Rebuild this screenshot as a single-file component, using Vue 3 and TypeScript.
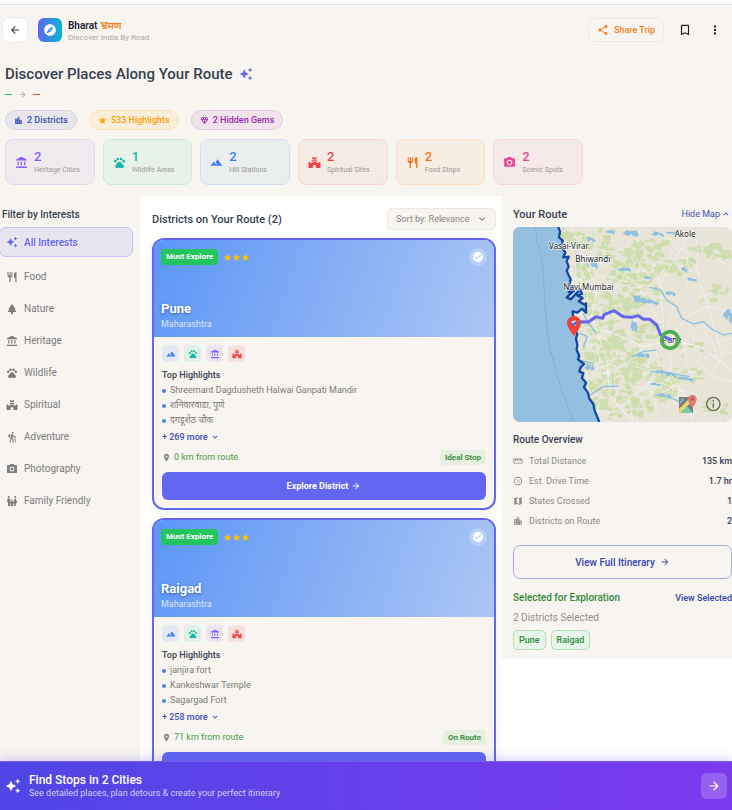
<script setup lang="ts">
import { ref, h, type FunctionalComponent } from 'vue'

const paths: Record<string, string> = {
  back: 'M20 11H7.8l5.6-5.6L12 4l-8 8 8 8 1.4-1.4L7.8 13H20z',
  forward: 'M12 4l-1.4 1.4 5.6 5.6H4v2h12.2l-5.6 5.6L12 20l8-8z',
  compass: 'M12 10.9c-.61 0-1.1.49-1.1 1.1s.49 1.1 1.1 1.1 1.1-.49 1.1-1.1-.49-1.1-1.1-1.1zM12 2C6.48 2 2 6.48 2 12s4.48 10 10 10 10-4.48 10-10S17.52 2 12 2zm2.19 12.19L6 18l3.81-8.19L18 6l-3.81 8.19z',
  share: 'M18 16.08c-.76 0-1.44.3-1.96.77L8.91 12.7c.05-.23.09-.46.09-.7s-.04-.47-.09-.7l7.05-4.11c.54.5 1.25.81 2.04.81 1.66 0 3-1.34 3-3s-1.34-3-3-3-3 1.34-3 3c0 .24.04.47.09.7L8.04 9.81C7.5 9.31 6.79 9 6 9c-1.66 0-3 1.34-3 3s1.34 3 3 3c.79 0 1.5-.31 2.04-.81l7.12 4.16c-.05.21-.08.43-.08.65 0 1.61 1.31 2.92 2.92 2.92s2.92-1.31 2.92-2.92-1.31-2.92-2.92-2.92z',
  bookmark: 'M17 3H7c-1.1 0-2 .9-2 2v16l7-3 7 3V5c0-1.1-.9-2-2-2zm0 15l-5-2.18L7 18V5h10z',
  more: 'M12 8a2 2 0 1 0 0-4 2 2 0 0 0 0 4zm0 2a2 2 0 1 0 0 4 2 2 0 0 0 0-4zm0 6a2 2 0 1 0 0 4 2 2 0 0 0 0-4z',
  sparkle: 'M19 9l1.25-2.75L23 5l-2.75-1.25L19 1l-1.25 2.75L15 5l2.75 1.25zM11.5 9.5L9 4 6.5 9.5 1 12l5.5 2.5L9 20l2.5-5.5L17 12zM19 15l-1.25 2.75L15 19l2.75 1.25L19 23l1.25-2.75L23 19l-2.75-1.25z',
  heritage: 'M4.5 10v7h2.3v-7zm6 0v7h2.3v-7zM2 22h20v-2.6H2zm14.8-12v7h2.3v-7zM12 1.5L2 6.3V8.5h20V6.3z',
  wildlife: 'M2 9.5a2.5 2.5 0 1 0 5 0 2.5 2.5 0 0 0-5 0zM6.5 5.5a2.5 2.5 0 1 0 5 0 2.5 2.5 0 0 0-5 0zM12.5 5.5a2.5 2.5 0 1 0 5 0 2.5 2.5 0 0 0-5 0zM17 9.5a2.5 2.5 0 1 0 5 0 2.5 2.5 0 0 0-5 0zM17.34 14.86c-.87-1.02-1.6-1.89-2.48-2.91-.46-.54-1.05-1.08-1.75-1.32-.35-.11-.75-.13-1.11-.13s-.77.02-1.12.14c-.7.24-1.28.78-1.75 1.32-.87 1.02-1.6 1.89-2.48 2.91-1.31 1.31-2.92 2.76-2.62 4.79.29 1.02 1.02 2.03 2.33 2.32.73.15 3.06-.44 5.54-.44h.18c2.48 0 4.81.58 5.54.44 1.31-.29 2.04-1.31 2.33-2.32.31-2.04-1.3-3.49-2.61-4.8z',
  hill: 'M14 6l-3.75 5 2.85 3.8-1.6 1.2C9.81 13.75 7 10 7 10l-6 8h22z',
  spiritual: 'M8 2h1.8v2h1.3V2h1.8v2h1.3V2H16v4.5H8zM7 8h10v2H7zM8.5 11.2h7V13H20v-2h3v11h-8v-3a3 3 0 0 0-6 0v3H1V11h3v2h4.5z',
  food: 'M11 9H9V2H7v7H5V2H3v7c0 2.12 1.66 3.84 3.75 3.97V22h2.5v-9.03C11.34 12.84 13 11.12 13 9V2h-2zm5-3v8h2.5v8H21V2c-2.76 0-5 2.24-5 4z',
  camera: 'M9 2L7.17 4H4c-1.1 0-2 .9-2 2v12c0 1.1.9 2 2 2h16c1.1 0 2-.9 2-2V6c0-1.1-.9-2-2-2h-3.17L15 2zm3 15a5 5 0 1 1 0-10 5 5 0 0 1 0 10zm0-1.8a3.2 3.2 0 1 0 0-6.4 3.2 3.2 0 0 0 0 6.4z',
  nature: 'M17 12h2L12 2 5.05 12H7l-3.9 6h6.92v4h3.96v-4H21z',
  hiking: 'M13.5 5.5a2 2 0 1 0 0-4 2 2 0 0 0 0 4zM17.5 10.78c-1.23-.37-2.22-1.17-2.8-2.18l-1-1.6c-.41-.65-1.11-1-1.84-1-.78 0-1.59.5-1.78 1.44S7 23 7 23h2.1l1.8-8 2.1 2v6h2v-7.5l-2.1-2 .6-3c1 1.15 2.41 2.01 4 2.34V23H19V9h-1.5zM7.43 13.13l-2.12-.41c-.54-.11-.9-.63-.79-1.17l.76-3.93c.21-1.08 1.26-1.79 2.34-1.58l1.16.23z',
  family: 'M5.5 6a2 2 0 1 0 0-4 2 2 0 0 0 0 4zm13 0a2 2 0 1 0 0-4 2 2 0 0 0 0 4zM12 12a1.5 1.5 0 1 0 0-3 1.5 1.5 0 0 0 0 3zM4 22v-7.5H2.5V9c0-1.1.9-2 2-2h2.2c1.1 0 2 .9 2 2v4.5h1.6c.4-.6 1-.8 1.7-.8s1.3.2 1.7.8h1.8L17 8.3c.3-.8.8-1.3 1.5-1.3s1.3.5 1.6 1.3L22.5 16H20v6h-3v-5h-2.5v5h-5v-6H8v6z',
  city: 'M15 11V5l-3-3-3 3v2H3v14h18V11zM7 19H5v-2h2zm0-4H5v-2h2zm0-4H5V9h2zm6 8h-2v-2h2zm0-4h-2v-2h2zm0-4h-2V9h2zm0-4h-2V5h2zm6 12h-2v-2h2zm0-4h-2v-2h2z',
  star: 'M12 17.27L18.18 21l-1.64-7.03L22 9.24l-7.19-.61L12 2 9.19 8.63 2 9.24l5.46 4.73L5.82 21z',
  gem: 'M19 3H5L2 9l10 12L22 9zM9.62 8l1.5-3h1.76l1.5 3zM11 10v6.68L5.44 10zm2 0h5.56L13 16.68zm6.26-2h-2.65l-1.5-3h2.65zM6.24 5h2.65l-1.5 3H4.74z',
  down: 'M7.4 8.6L12 13.2l4.6-4.6L18 10l-6 6-6-6z',
  up: 'M12 8l-6 6 1.4 1.4 4.6-4.6 4.6 4.6L18 14z',
  pin: 'M12 2a7 7 0 0 0-7 7c0 5.25 7 13 7 13s7-7.75 7-13a7 7 0 0 0-7-7zm0 9.5a2.5 2.5 0 1 1 0-5 2.5 2.5 0 0 1 0 5z',
  ruler: 'M21 6H3c-1.1 0-2 .9-2 2v8c0 1.1.9 2 2 2h18c1.1 0 2-.9 2-2V8c0-1.1-.9-2-2-2zm0 10H3V8h2v4h2V8h2v4h2V8h2v4h2V8h2v4h2V8h2z',
  clock: 'M12 2a10 10 0 1 0 0 20 10 10 0 0 0 0-20zm0 18a8 8 0 1 1 0-16 8 8 0 0 1 0 16zm.5-13H11v6l5.2 3.2.8-1.3-4.5-2.7z',
  map: 'M20.5 3l-.16.03L15 5.1 9 3 3.36 4.9c-.21.07-.36.25-.36.48V20.5c0 .28.22.5.5.5l.16-.03L9 18.9l6 2.1 5.64-1.9c.21-.07.36-.25.36-.48V3.5c0-.28-.22-.5-.5-.5zM15 19l-6-2.11V5l6 2.11z',
  check: 'M12 2a10 10 0 1 0 0 20 10 10 0 0 0 0-20zm-2 15l-5-5 1.41-1.41L10 14.17l7.59-7.59L19 8z',
}

const Icon: FunctionalComponent<{ name: string }> = (props) =>
  h('svg', { viewBox: '0 0 24 24', 'aria-hidden': 'true' }, [h('path', { d: paths[props.name], fill: 'currentColor', 'fill-rule': 'evenodd' })])
Icon.props = ['name']

const chips = [
  { icon: 'city', text: '2 Districts', tone: 'indigo' },
  { icon: 'star', text: '533 Highlights', tone: 'amber' },
  { icon: 'gem', text: '2 Hidden Gems', tone: 'purple' },
]

const stats = [
  { icon: 'heritage', count: 2, label: 'Heritage Cities', tone: 'violet' },
  { icon: 'wildlife', count: 1, label: 'Wildlife Areas', tone: 'teal' },
  { icon: 'hill', count: 2, label: 'Hill Stations', tone: 'blue' },
  { icon: 'spiritual', count: 2, label: 'Spiritual Sites', tone: 'red' },
  { icon: 'food', count: 2, label: 'Food Stops', tone: 'orange' },
  { icon: 'camera', count: 2, label: 'Scenic Spots', tone: 'pink' },
]

const filters = [
  { icon: 'sparkle', label: 'All Interests' },
  { icon: 'food', label: 'Food' },
  { icon: 'nature', label: 'Nature' },
  { icon: 'heritage', label: 'Heritage' },
  { icon: 'wildlife', label: 'Wildlife' },
  { icon: 'spiritual', label: 'Spiritual' },
  { icon: 'hiking', label: 'Adventure' },
  { icon: 'camera', label: 'Photography' },
  { icon: 'family', label: 'Family Friendly' },
]
const activeFilter = ref('All Interests')

interface District {
  name: string
  state: string
  highlights: string[]
  more: number
  distance: string
  badge: string
  selected: boolean
}
const districts = ref<District[]>([
  { name: 'Pune', state: 'Maharashtra', highlights: ['Shreemant Dagdusheth Halwai Ganpati Mandir', 'शनिवारवाडा, पुणे', 'दगडूशेठ चौक'], more: 269, distance: '0 km from route', badge: 'Ideal Stop', selected: true },
  { name: 'Raigad', state: 'Maharashtra', highlights: ['janjira fort', 'Kankeshwar Temple', 'Sagargad Fort'], more: 258, distance: '71 km from route', badge: 'On Route', selected: true },
])
const tags = [
  { icon: 'hill', tone: 'blue' },
  { icon: 'wildlife', tone: 'teal' },
  { icon: 'heritage', tone: 'violet' },
  { icon: 'spiritual', tone: 'red' },
]

const overview = [
  { icon: 'ruler', label: 'Total Distance', value: '135 km' },
  { icon: 'clock', label: 'Est. Drive Time', value: '1.7 hr' },
  { icon: 'map', label: 'States Crossed', value: '1' },
  { icon: 'city', label: 'Districts on Route', value: '2' },
]

const showMap = ref(true)

// Seeded generator so the terrain is the same on every load
let seed = 11
const rnd = () => {
  seed = (seed * 16807) % 2147483647
  return seed / 2147483647
}
const blob = (cx: number, cy: number, rx: number, ry: number) => {
  const n = 11
  const pts: string[] = []
  for (let i = 0; i < n; i++) {
    const a = (i / n) * Math.PI * 2
    const k = 0.4 + rnd() * 0.8
    pts.push(`${Math.round(cx + Math.cos(a) * rx * k)} ${Math.round(cy + Math.sin(a) * ry * k)}`)
  }
  return `M${pts.join('L')}Z`
}
// Forest clusters: centre x, centre y, spread x, spread y, number of patches
const clusters = [
  [225, 110, 35, 28, 16], [310, 140, 40, 55, 18], [370, 200, 70, 60, 34], [440, 150, 70, 30, 26],
  [500, 200, 70, 30, 26], [630, 160, 60, 25, 24], [250, 220, 25, 30, 10], [420, 270, 60, 50, 32],
  [300, 310, 40, 30, 18], [380, 320, 60, 30, 22], [640, 280, 45, 25, 8], [310, 400, 50, 50, 32],
  [380, 440, 50, 50, 32], [290, 480, 40, 40, 26], [350, 530, 60, 50, 36], [430, 500, 60, 40, 24],
  [300, 580, 40, 50, 28], [390, 610, 60, 40, 32], [480, 570, 50, 40, 20], [560, 530, 60, 25, 14],
  [570, 450, 40, 20, 6], [640, 620, 40, 20, 8], [450, 390, 40, 25, 12],
]
const forest = clusters.map(([x, y, w, t, n]) =>
  Array.from({ length: n }, () => blob(x + (rnd() * 2 - 1) * w, y + (rnd() * 2 - 1) * t, 6 + rnd() * 14, 4 + rnd() * 9)).join(''),
)
// Minor roads wander away from each start point
const roads = Array.from({ length: 62 }, () => {
  let x = 220 + rnd() * 470
  let y = 90 + rnd() * 570
  let d = `M${Math.round(x)} ${Math.round(y)}`
  const a = rnd() * Math.PI * 2
  for (let i = 0; i < 7; i++) {
    x += Math.cos(a) * 16 + (rnd() - 0.5) * 16
    y += Math.sin(a) * 16 + (rnd() - 0.5) * 16
    d += `L${Math.round(Math.max(215 + (y > 450 ? (y - 450) / 3 : 0), x))} ${Math.round(y)}`
  }
  return d
}).join('')
const lakes = [
  [385, 98, 20, 10], [470, 100, 16, 8], [270, 118, 12, 6], [508, 98, 16, 4], [370, 208, 18, 5], [550, 208, 9, 9],
  [412, 296, 20, 12], [450, 305, 16, 8], [398, 375, 9, 16], [508, 280, 14, 6], [426, 465, 18, 8], [480, 516, 24, 6],
  [505, 522, 18, 7], [550, 535, 22, 5], [462, 552, 14, 4], [680, 345, 12, 18], [485, 585, 20, 5], [265, 500, 12, 10],
  [280, 195, 10, 9], [330, 95, 12, 5], [572, 238, 14, 5], [440, 232, 10, 5],
]
  .map(([x, y, w, t]) => blob(x, y, w, t) + blob(x + w, y + t / 2, w / 2, t))
  .join('')
const coast = 'M174 78L180 95 177 112 188 122 184 140 196 158 190 172 206 170 200 184 206 200 200 212 205 224 212 238 207 258 220 262 206 276 222 272 200 292 212 298 240 268 246 282 232 286 248 294 236 304 254 314 258 310 258 338 246 326 232 338 218 334 220 358 206 362 226 390 232 402 228 416 232 434 230 450 238 468 234 478 252 492 242 502 238 514 250 520 246 534 258 548 252 562 264 578 268 596 280 612 284 632 298 666'
</script>

<template>
  <div class="shell">
    <div class="topline"></div>
    <div class="content">
      <header class="head">
        <div class="bar">
          <button class="back" type="button" aria-label="Back"><Icon name="back" /></button>
          <span class="logo"><Icon name="compass" /></span>
          <div class="brand">
            <strong>Bharat <em>भ्रमण</em></strong>
            <small>Discover India By Road</small>
          </div>
          <button class="share" type="button"><Icon name="share" />Share Trip</button>
          <button class="ghost" type="button" aria-label="Bookmark"><Icon name="bookmark" /></button>
          <button class="ghost" type="button" aria-label="More"><Icon name="more" /></button>
        </div>
        <h1>Discover Places Along Your Route <Icon name="sparkle" /></h1>
        <div class="ends"><i class="from"></i><Icon name="forward" /><i class="to"></i></div>
        <div class="chips">
          <span v-for="c in chips" :key="c.text" class="chip" :class="c.tone"><Icon :name="c.icon" />{{ c.text }}</span>
        </div>
        <div class="stats">
          <div v-for="s in stats" :key="s.label" class="stat" :class="s.tone">
            <Icon :name="s.icon" />
            <div><b>{{ s.count }}</b><span>{{ s.label }}</span></div>
          </div>
        </div>
      </header>

      <div class="columns">
        <nav class="filters">
          <h2>Filter by Interests</h2>
          <button v-for="f in filters" :key="f.label" type="button" :class="{ active: activeFilter === f.label }" @click="activeFilter = f.label">
            <Icon :name="f.icon" />{{ f.label }}
          </button>
        </nav>

        <main class="list">
          <div class="listhead">
            <h2>Districts on Your Route ({{ districts.length }})</h2>
            <div class="sort">
              <select aria-label="Sort by"><option>Sort by: Relevance</option></select>
              <Icon name="down" />
            </div>
          </div>
          <article v-for="d in districts" :key="d.name" class="card">
            <div class="hero">
              <div class="herotop">
                <span class="must">Must Explore</span>
                <span class="stars"><Icon v-for="n in 3" :key="n" name="star" /></span>
                <label class="pick"><input v-model="d.selected" type="checkbox" :aria-label="d.name" /><Icon name="check" /></label>
              </div>
              <h3>{{ d.name }}</h3>
              <p>{{ d.state }}</p>
            </div>
            <div class="body">
              <div class="tags"><span v-for="t in tags" :key="t.icon" :class="t.tone"><Icon :name="t.icon" /></span></div>
              <h4>Top Highlights</h4>
              <ul><li v-for="x in d.highlights" :key="x">{{ x }}</li></ul>
              <button class="expand" type="button">+ {{ d.more }} more <Icon name="down" /></button>
              <div class="meta"><Icon name="pin" /><span>{{ d.distance }}</span><em>{{ d.badge }}</em></div>
              <button class="explore" type="button">Explore District <Icon name="forward" /></button>
            </div>
          </article>
        </main>

        <aside class="route">
          <div class="row">
            <h2>Your Route</h2>
            <button class="toggle" type="button" @click="showMap = !showMap">Hide Map <Icon name="up" /></button>
          </div>
          <svg v-if="showMap" class="mapview" viewBox="39 81 657 585" preserveAspectRatio="xMidYMid slice">
            <rect x="39" y="81" width="657" height="585" fill="#e8e5d8" />
            <path v-for="(f, i) in forest" :key="i" :d="f" fill="#cfdeae" />
            <path :d="roads" fill="none" stroke="#f5f3ec" stroke-width="2" />
            <path d="M510 420L560 350 620 320 696 335M510 420L600 440 696 510M510 420L512 520 560 600 580 666M510 420L430 440 340 400 262 380M490 380L480 250 560 120 580 81M215 81L250 170 330 200 410 250 490 380M250 170L290 270 275 350 320 480 330 590 400 666M600 250L625 320 660 440M580 470L640 530 696 545" fill="none" stroke="#fbfaf6" stroke-width="2" />
            <path :d="lakes" fill="#8fbfe3" />
            <path d="M448 262L480 268 500 300 530 320 545 355 580 372 610 365 640 390 670 405 696 400M225 160L255 180 265 200M250 340L265 370 290 400M240 400L262 410 250 440M235 480L280 490M270 585L310 560 355 558M470 585L500 590 540 605M395 470L430 455 470 450M450 515L500 518 570 530" fill="none" stroke="#8fbfe3" stroke-width="4" stroke-linejoin="round" />
            <path :d="coast + 'L39 666V78Z'" fill="#94bfe1" />
            <path d="M107 81L112 130 126 180 132 260 138 360 148 440 176 540 200 610 222 666" fill="none" stroke="#8a9bab" stroke-width="2" stroke-dasharray="14 4" />
            <path :d="coast" fill="none" stroke="#1148a3" stroke-width="7" stroke-linejoin="round" />
            <g class="places">
              <text x="147" y="148">Vasai-Virar</text>
              <text x="226" y="185">Bhiwandi</text>
              <text x="190" y="269">Navi Mumbai</text>
              <text x="524" y="110">Akole</text>
              <text x="487" y="428">Pune</text>
            </g>
            <path d="M222 372L235 365 265 366 288 350 308 355 312 344 342 332 370 350 395 352 415 347 430 358 450 358 470 375 482 405 510 418" fill="none" stroke="#6366f1" stroke-width="9" stroke-linejoin="round" stroke-linecap="round" />
            <circle cx="510" cy="420" r="25" fill="none" stroke="#4caf50" stroke-width="11" />
            <path fill="#f44336" fill-rule="evenodd" d="M222 348a21 21 0 0 0-21 21c0 14 21 39 21 39s21-25 21-39a21 21 0 0 0-21-21zm0 29a8 8 0 1 1 0-16 8 8 0 0 1 0 16z" />
            <g opacity=".85">
              <path d="M537 591h42v48h-42z" fill="#626c72" />
              <path d="M537 639v-12l36-36h6v10l-37 38z" fill="#f2d558" />
              <path d="M541 639l20-20 19 20z" fill="#5fc8a0" />
              <path d="M540 603h5v-7h5v7h-5v5h-5z" fill="#7cc5e8" />
              <path fill="#e0685f" d="M577 585a13 13 0 0 0-13 13c0 10 13 25 13 25s13-15 13-25a13 13 0 0 0-13-13z" />
              <circle cx="577" cy="597" r="5" fill="#a54540" />
            </g>
            <circle cx="640" cy="612" r="20" fill="none" stroke="#69695f" stroke-width="4" />
            <path d="M638 601h4v4h-4zM638 610h4v13h-4z" fill="#69695f" />
          </svg>
          <h3>Route Overview</h3>
          <dl>
            <div v-for="o in overview" :key="o.label"><Icon :name="o.icon" /><dt>{{ o.label }}</dt><dd>{{ o.value }}</dd></div>
          </dl>
          <button class="full" type="button">View Full Itinerary <Icon name="forward" /></button>
          <div class="row">
            <h3 class="green">Selected for Exploration</h3>
            <a href="#selected">View Selected</a>
          </div>
          <p>2 Districts Selected</p>
          <div class="picked"><span v-for="d in districts" :key="d.name">{{ d.name }}</span></div>
        </aside>
      </div>
    </div>

    <footer class="cta">
      <Icon name="sparkle" />
      <div><strong>Find Stops in 2 Cities</strong><span>See detailed places, plan detours &amp; create your perfect itinerary</span></div>
      <button type="button" aria-label="Find stops"><Icon name="forward" /></button>
    </footer>
  </div>
</template>

<style>
body {
  margin: 0;
  background: #fff;
}
</style>

<style scoped>
* {
  box-sizing: border-box;
  margin: 0;
  padding: 0;
}
.shell {
  display: flex;
  flex-direction: column;
  height: 100vh;
  font-family: Roboto, "Noto Sans", sans-serif;
  font-size: 9px;
  color: #374151;
}
button, select {
  font: inherit;
  color: inherit;
  background: none;
  border: 0;
  cursor: pointer;
}
svg {
  display: block;
  flex: none;
  width: 12px;
  height: 12px;
}
h1, h2, h3, h4 {
  font-weight: 500;
}
.topline {
  flex: none;
  height: 6px;
  background: linear-gradient(#fff 4px, #dedede 4px, #dedede 5px, #fff 5px);
}
.content {
  flex: 1;
  min-height: 0;
  overflow-y: auto;
  scrollbar-width: none;
}
.head {
  background: #f8f4ef;
  padding: 11px 5px;
}
.bar {
  display: flex;
  align-items: center;
  height: 26px;
}
.back {
  display: grid;
  place-items: center;
  width: 26px;
  height: 26px;
  margin-left: -3px;
  background: #fff;
  border: 1px solid #e9eaee;
  border-radius: 7px;
  color: #333;
}
.logo {
  display: grid;
  place-items: center;
  width: 24px;
  height: 24px;
  margin: 0 6px 0 10px;
  border-radius: 6px;
  background: linear-gradient(90deg, #6366f1, #06b6d4);
  color: #fff;
}
.logo svg {
  width: 14px;
  height: 14px;
}
.brand {
  flex: 1;
  display: grid;
}
.brand strong {
  font-size: 10px;
  line-height: 15px;
  font-weight: 600;
  color: #1f2333;
}
.brand em {
  font-style: normal;
  color: #f97b22;
}
.brand small {
  font-size: 8px;
  line-height: 9px;
  color: #a9a7a5;
}
.share {
  display: flex;
  align-items: center;
  gap: 5px;
  height: 24px;
  padding: 0 8px;
  border: 1px solid #e9e9ea;
  border-radius: 6px;
  color: #f97b22;
  font-size: 9px;
  font-weight: 500;
}
.ghost {
  display: grid;
  place-items: center;
  width: 30px;
  height: 24px;
  color: #222;
}
.share + .ghost {
  margin-left: 6px;
}
.ghost:last-child {
  margin-right: -3px;
}
.ghost svg {
  width: 14px;
  height: 14px;
}
h1 {
  display: flex;
  align-items: center;
  gap: 6px;
  margin-top: 21px;
  font-size: 15px;
  line-height: 20px;
}
h1 svg {
  width: 14px;
  height: 14px;
  color: #6366f1;
}
.ends {
  display: flex;
  align-items: center;
  gap: 6px;
  height: 13px;
  margin-top: 4px;
  color: #a3a3a3;
}
.ends svg {
  width: 9px;
  height: 9px;
}
.ends i {
  width: 7px;
  height: 1px;
  background: #22c55e;
}
.ends .to {
  background: #ef4444;
}
.chips {
  display: flex;
  gap: 12px;
  margin-top: 9px;
}
.chip {
  display: flex;
  align-items: center;
  gap: 4px;
  height: 20px;
  padding: 0 8px;
  border: 1px solid;
  border-radius: 10px;
  font-size: 9px;
  font-weight: 500;
}
.chip svg {
  width: 9px;
  height: 9px;
}
.stats {
  display: grid;
  grid-template-columns: repeat(6, 1fr);
  gap: 8px;
  max-width: 578px;
  margin-top: 9px;
}
.stat {
  display: flex;
  align-items: center;
  gap: 6px;
  height: 46px;
  padding: 0 9px;
  border: 1px solid;
  border-radius: 8px;
}
.indigo { color: #3f51b5; background: #e8e6eb; border-color: #d5d5e5; }
.amber { color: #ffa000; background: #f9eedb; border-color: #fae2b8; }
.purple { color: #9c27b0; background: #f1e3ea; border-color: #e5cbe2; }
.violet { color: #8b5cf6; background: #f0ebef; border-color: #e2d9f0; }
.teal { color: #14b8a6; background: #e8f1ea; border-color: #d0e9e0; }
.blue { color: #3b82f6; background: #eaeeef; border-color: #d3e0f1; }
.red { color: #ef4444; background: #f6eae5; border-color: #f6d7d2; }
.orange { color: #f97316; background: #f7ede3; border-color: #f8dfc9; }
.pink { color: #ec4899; background: #f6e9ea; border-color: #f5d6e2; }
.stat svg {
  width: 13px;
  height: 13px;
}
.stat b {
  display: block;
  font-size: 13px;
  line-height: 16px;
  font-weight: 500;
}
.stat span {
  display: block;
  font-size: 7px;
  line-height: 10px;
  white-space: nowrap;
  color: #9b9997;
}
.columns {
  display: grid;
  grid-template-columns: 140px 1fr 230px;
}
.filters {
  display: flex;
  flex-direction: column;
  gap: 3px;
  padding: 11px 7px 60px 0;
  background: #f8f4ef;
}
.filters h2 {
  padding-left: 2px;
  font-size: 10px;
  line-height: 16px;
}
.filters button {
  display: flex;
  align-items: center;
  gap: 6px;
  height: 29px;
  padding: 0 6px;
  border: 1px solid transparent;
  border-radius: 7px;
  margin-left: -1px;
  font-size: 10px;
  color: #7b7b7e;
}
.filters button.active {
  height: 30px;
  margin-top: 1px;
  margin-bottom: 2px;
  background: #e9e5f0;
  border-color: #c5c3f2;
  color: #6366f1;
  font-weight: 500;
}
.list {
  padding: 12px 6px 60px 12px;
}
.listhead {
  display: flex;
  align-items: center;
  justify-content: space-between;
  height: 22px;
  margin-bottom: 8px;
}
.listhead h2 {
  font-size: 11px;
}
.sort {
  display: grid;
  align-items: center;
  background: #f8f4ef;
  border: 1px solid #e8e8e9;
  border-radius: 5px;
  height: 22px;
  color: #85858a;
}
.sort select, .sort svg {
  grid-area: 1 / 1;
}
.sort select {
  appearance: none;
  height: 20px;
  padding: 0 25px 0 8px;
  font-size: 9px;
}
.sort svg {
  justify-self: end;
  margin-right: 7px;
  pointer-events: none;
}
.card {
  overflow: hidden;
  margin-bottom: 8px;
  border: 2px solid #6366f1;
  border-radius: 12px;
  background: #f8f4ef;
  box-shadow: 0 2px 12px rgba(0, 0, 0, 0.06);
}
.hero {
  height: 97px;
  padding: 8px 7px;
  background: linear-gradient(110deg, #5c96f7, #acc6f3);
  color: #fff;
}
.herotop {
  display: flex;
  align-items: center;
  height: 18px;
  margin-bottom: 35px;
}
.must {
  padding: 0 5px;
  border-radius: 4px;
  background: #22c55e;
  font-size: 8px;
  line-height: 16px;
  font-weight: 700;
}
.stars {
  display: flex;
  flex: 1;
  margin-left: 5px;
  color: #ffc107;
}
.stars svg {
  width: 9px;
  height: 9px;
}
.pick {
  display: grid;
  place-items: center;
  width: 18px;
  height: 18px;
  border-radius: 50%;
  background: rgba(255, 255, 255, 0.25);
}
.pick input {
  grid-area: 1 / 1;
  appearance: none;
  width: 18px;
  height: 18px;
}
.pick svg {
  grid-area: 1 / 1;
  pointer-events: none;
}
.hero h3 {
  font-size: 13px;
  line-height: 16px;
  font-weight: 700;
  text-shadow: 0 1px 3px rgba(0, 0, 0, 0.4);
}
.hero p {
  font-size: 9px;
  line-height: 14px;
  color: #dce8fd;
}
.body {
  padding: 8px;
}
.tags {
  display: flex;
  gap: 5px;
}
.tags span {
  display: grid;
  place-items: center;
  width: 17px;
  height: 17px;
  border-radius: 4px;
}
.tags svg {
  width: 10px;
  height: 10px;
}
.tags .blue { background: #e4e9f1; }
.tags .teal { background: #dff0e8; }
.tags .violet { background: #ebe4f1; }
.tags .red { background: #f8e1dc; }
.body h4 {
  margin-top: 6px;
  font-size: 9px;
  line-height: 14px;
}
.body ul {
  margin-top: 1px;
  list-style: none;
}
.body li {
  display: flex;
  align-items: center;
  gap: 4px;
  height: 15px;
  font-size: 9px;
  line-height: 15px;
  color: #7b7b7e;
}
.body li::before {
  content: "";
  width: 4px;
  height: 4px;
  border-radius: 50%;
  background: #3b82f6;
}
.expand {
  display: flex;
  align-items: center;
  gap: 2px;
  height: 14px;
  margin-top: 2px;
  font-weight: 500;
  color: #3f51b5;
}
.expand svg {
  width: 10px;
  height: 10px;
}
.meta {
  display: flex;
  align-items: center;
  gap: 3px;
  height: 14px;
  margin-top: 6px;
  color: #8a8a8a;
}
.meta svg {
  width: 9px;
  height: 9px;
}
.meta span {
  flex: 1;
  font-size: 9px;
  color: #43a047;
}
.meta em {
  padding: 0 5px;
  border-radius: 4px;
  background: #e7efdf;
  font-size: 8px;
  line-height: 15px;
  font-style: normal;
  font-weight: 600;
  color: #2e8b3a;
}
.explore {
  display: flex;
  align-items: center;
  justify-content: center;
  gap: 3px;
  width: 100%;
  height: 28px;
  margin-top: 8px;
  border-radius: 6px;
  background: #6366f1;
  color: #fff;
  font-size: 9px;
  font-weight: 700;
}
.explore svg {
  width: 10px;
  height: 10px;
}
.route {
  align-self: start;
  padding: 10px 0 9px 11px;
  background: #f8f4ef;
}
.row {
  display: flex;
  align-items: center;
  justify-content: space-between;
  height: 16px;
}
.row h2 {
  font-size: 11px;
}
.row a {
  font-size: 9px;
  font-weight: 500;
  color: #3344b0;
  text-decoration: none;
}
.toggle {
  display: flex;
  align-items: center;
  gap: 1px;
  margin-right: 1px;
  color: #3f51b5;
}
.toggle svg {
  width: 10px;
  height: 10px;
}
.mapview {
  width: 100%;
  height: auto;
  margin: 5px 0 10px;
  border-radius: 7px;
}
.places text {
  font-family: "Noto Sans", sans-serif;
  font-size: 24px;
  fill: #222;
  stroke: #fff;
  stroke-width: 4px;
  stroke-opacity: 0.8;
  paint-order: stroke;
}
.route h3 {
  font-size: 10px;
  line-height: 16px;
}
.route .green {
  color: #2e8b3a;
}
dl {
  display: grid;
  gap: 6px;
  margin-top: 6px;
}
dl div {
  display: flex;
  align-items: center;
  gap: 6px;
  height: 14px;
  color: #8a8a8d;
}
dl svg {
  width: 10px;
  height: 10px;
}
dt {
  flex: 1;
  font-size: 9px;
}
dd {
  font-size: 9px;
  font-weight: 500;
  color: #374151;
}
.full {
  display: flex;
  align-items: center;
  justify-content: center;
  gap: 5px;
  width: 100%;
  height: 34px;
  margin: 17px 0 11px;
  border: 1px solid #a5acdf;
  border-radius: 7px;
  font-size: 10px;
  font-weight: 500;
  color: #3344b0;
}
.full svg {
  width: 10px;
  height: 10px;
}
.route p {
  margin: 4px 0;
  font-size: 10px;
  line-height: 16px;
  color: #8f8f90;
}
.picked {
  display: flex;
  gap: 5px;
}
.picked span {
  padding: 0 5px;
  border: 1px solid #b5dfb8;
  border-radius: 5px;
  background: #e8f5e9;
  font-size: 9px;
  line-height: 18px;
  font-weight: 500;
  color: #2e8b3a;
}
.cta {
  position: relative;
  flex: none;
  display: flex;
  align-items: center;
  gap: 8px;
  height: 49px;
  padding: 0 5px;
  border-top: 1px solid #7b5bec;
  background: linear-gradient(90deg, #4f46e5, #7c3aed);
  box-shadow: 0 -2px 10px rgba(79, 70, 229, 0.25);
  color: #fff;
}
.cta > svg {
  width: 16px;
  height: 16px;
}
.cta div {
  flex: 1;
}
.cta strong {
  display: block;
  font-size: 12px;
  line-height: 14px;
  font-weight: 500;
}
.cta span {
  display: block;
  font-size: 9px;
  line-height: 12px;
  color: #d3cdfa;
}
.cta button {
  display: grid;
  place-items: center;
  width: 26px;
  height: 26px;
  border-radius: 6px;
  background: rgba(255, 255, 255, 0.2);
}
.cta button svg {
  width: 14px;
  height: 14px;
}
</style>
